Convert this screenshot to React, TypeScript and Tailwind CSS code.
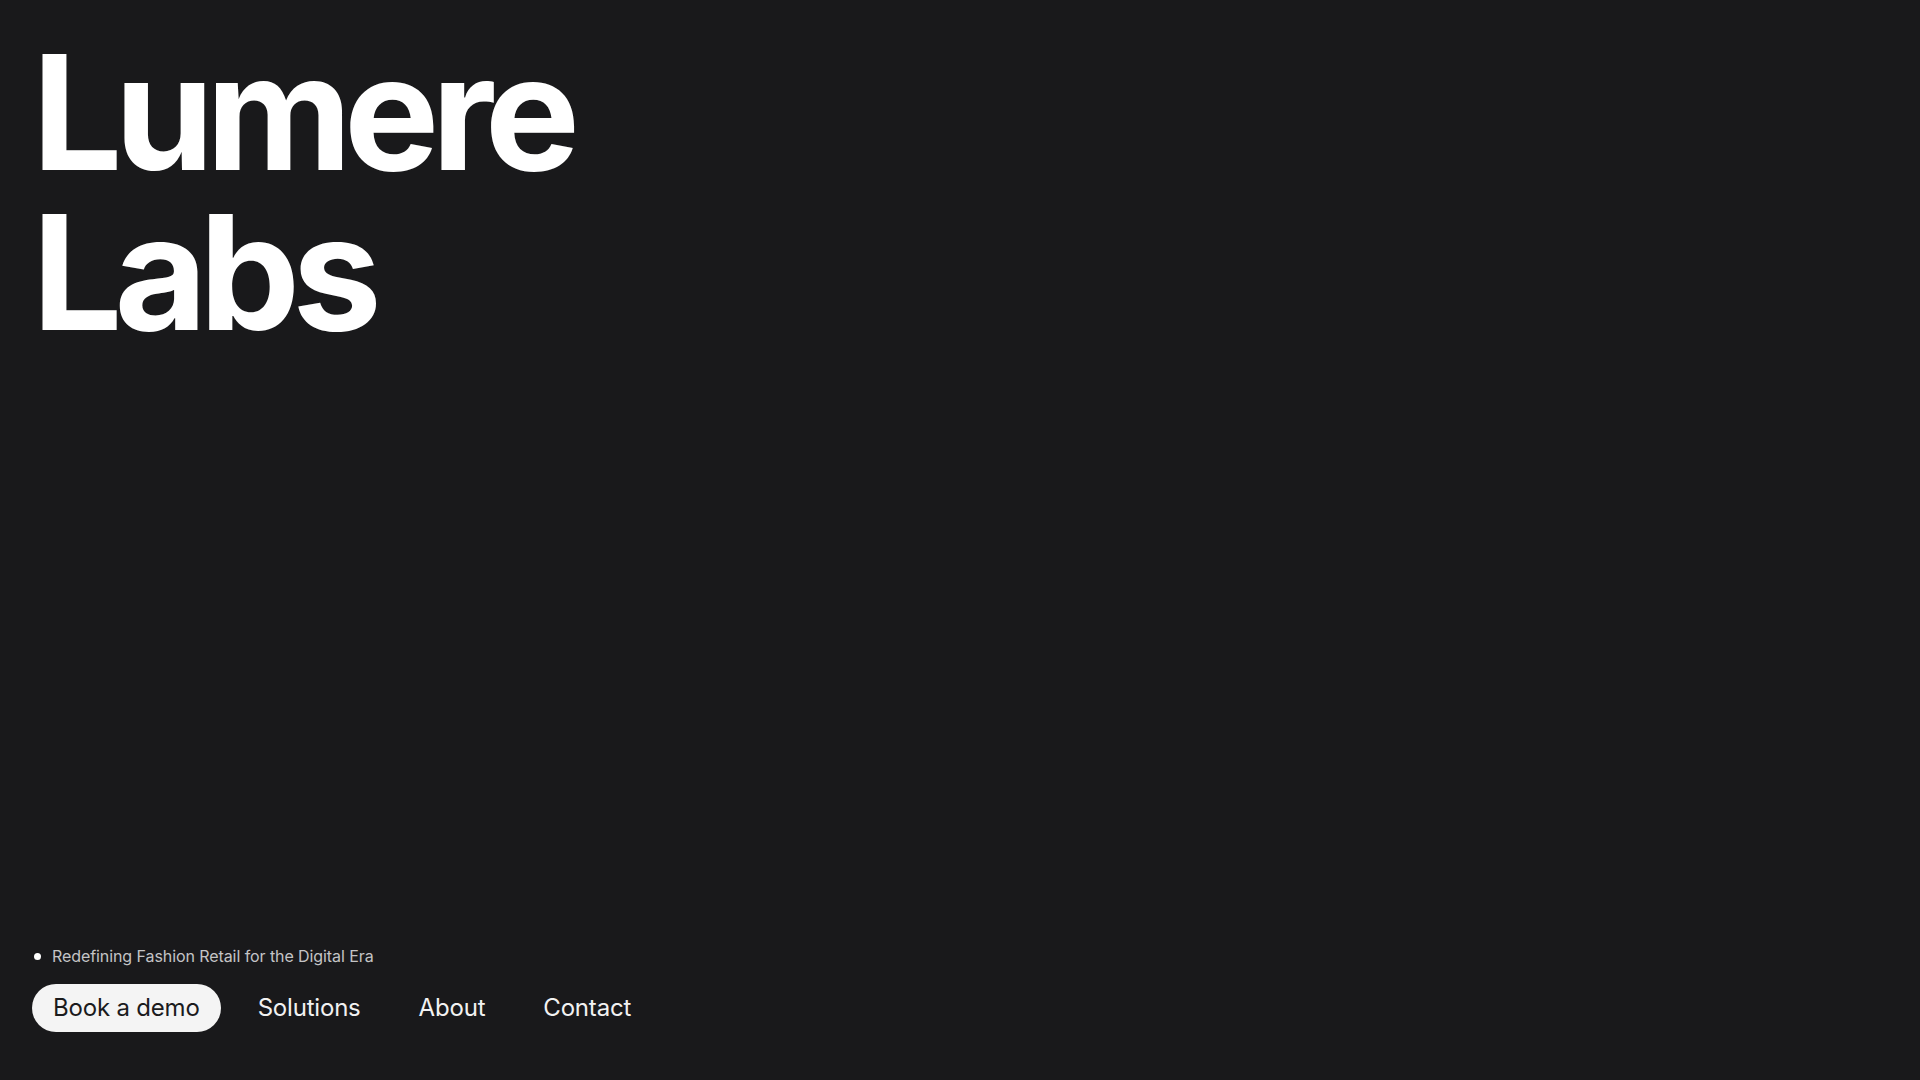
const links = ["Solutions", "About", "Contact"];

const App = () => {
  return (
    <div
      className="h-screen w-full bg-[#19191b] text-white flex flex-col justify-between pt-8 pb-12 px-8"
      style={{ fontFamily: "Inter, 'Noto Sans', sans-serif" }}
    >
      {/* big wordmark */}
      <h1 className="text-[160px] leading-none font-bold tracking-[-0.05em] text-white">
        Lumere
        <br />
        Labs
      </h1>

      <div className="flex flex-col">
        <div className="flex items-center gap-[11px] pl-[2px] text-[16px] leading-6 text-[#c4c4c6] tracking-[-0.005em]">
          <span className="w-[7px] h-[7px] rounded-full bg-white" />
          Redefining Fashion Retail for the Digital Era
        </div>

        <nav className="flex items-center gap-4 mt-[16px] tracking-[-0.012em]">
          <a className="h-12 flex items-center px-[21px] rounded-full bg-[#f4f4f4] text-[#1b1b1d] text-[24px] cursor-pointer">
            Book a demo
          </a>
          {links.map((l) => (
            <a
              key={l}
              className="h-12 flex items-center px-[21px] text-[24px] text-[#f2f2f2] cursor-pointer"
            >
              {l}
            </a>
          ))}
        </nav>
      </div>
    </div>
  );
};

export default App;
